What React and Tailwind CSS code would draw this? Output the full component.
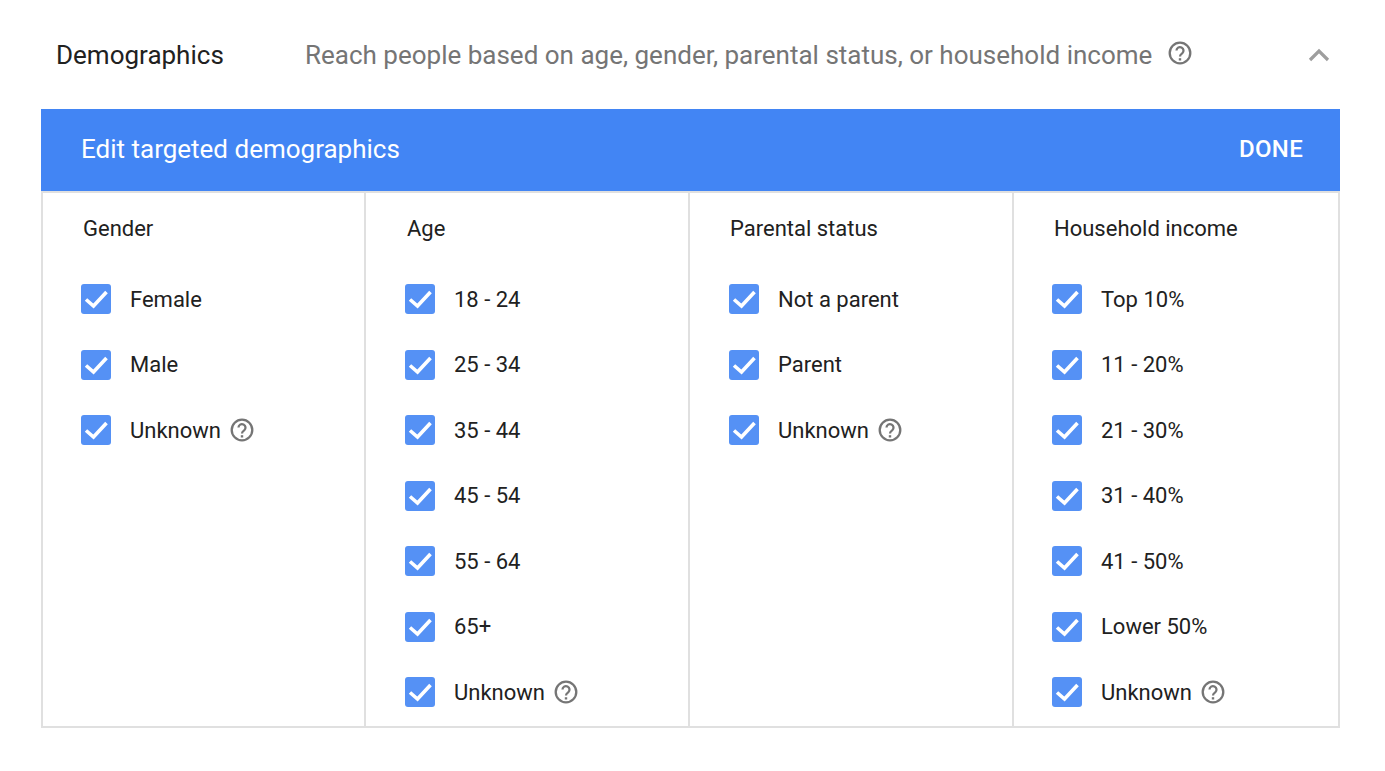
const columns = [
  { title: "Gender", width: "w-[323px] pl-10", rows: "-ml-0.5", options: [["Female"], ["Male"], ["Unknown", true]] },
  {
    title: "Age",
    width: "w-[324px] pl-[41px]",
    rows: "-ml-0.5",
    options: [["18 - 24"], ["25 - 34"], ["35 - 44"], ["45 - 54"], ["55 - 64"], ["65+"], ["Unknown", true]],
  },
  {
    title: "Parental status",
    width: "w-[324px] pl-10",
    rows: "-ml-px",
    options: [["Not a parent"], ["Parent"], ["Unknown", true]],
  },
  {
    title: "Household income",
    width: "flex-1 pl-10",
    rows: "-ml-0.5",
    options: [["Top 10%"], ["11 - 20%"], ["21 - 30%"], ["31 - 40%"], ["41 - 50%"], ["Lower 50%"], ["Unknown", true]],
  },
];

function HelpIcon({ className }) {
  return (
    <svg viewBox="0 0 24 24" className={className} fill="none" stroke="#757575">
      <circle cx="12" cy="12" r="10.3" strokeWidth="2.3" />
      <path d="M8.5 9.6a3.5 3.5 0 1 1 5.7 2.7c-1.3.9-2.2 1.5-2.2 3.1" strokeWidth="2.3" />
      <path d="M10.8 17.2h2.4v2.3h-2.4z" fill="#757575" stroke="none" />
    </svg>
  );
}

function Checkbox() {
  return (
    <span className="flex h-[30px] w-[30px] shrink-0 items-center justify-center rounded-[3px] bg-[#5591f5]">
      <svg viewBox="0 0 30 30" className="h-[30px] w-[30px]" fill="none">
        <path d="M5 15.5l7.5 6.5L25.5 8" stroke="white" strokeWidth="3.6" />
      </svg>
    </span>
  );
}

function Column({ title, width, rows, options, last }) {
  return (
    <div className={`${width} pt-[23px] ${last ? "" : "border-r-2 border-[#e0e0e0]"}`}>
      <h3 className="h-[26px] text-[22px] leading-[26px] text-[#212121]">{title}</h3>
      <div className={`${rows} mt-[42.1px] flex flex-col gap-[35.5px]`}>
        {options.map(([label, help]) => (
          <label key={label} className="flex h-[30px] items-center">
            <Checkbox />
            <span className="ml-[19px] text-[22px] text-[#212121]">{label}</span>
            {help && <HelpIcon className="ml-[9px] h-6 w-6" />}
          </label>
        ))}
      </div>
    </div>
  );
}

export default function App() {
  return (
    <div className="min-h-[771px] bg-white px-[41px] font-['Roboto',sans-serif]">
      <div className="flex h-[109px] items-center pr-[13px]">
        <div className="mt-0.5 flex items-center">
          <div className="w-[264px] pl-[15px] text-[26px] text-[#212121]">Demographics</div>
          <div className="text-[26px] text-[#757575]">Reach people based on age, gender, parental status, or household income</div>
        </div>
        <HelpIcon className="ml-4 mb-1 h-6 w-6" />
        <svg viewBox="0 0 24 16" className="ml-auto h-4 w-6" fill="none">
          <path d="M3 13l9-9 9 9" stroke="#9e9e9e" strokeWidth="3.2" />
        </svg>
      </div>
      <div className="w-[1299px]">
        <div className="flex h-[82px] items-center justify-between bg-[#4285f4] pb-0.5 pl-10 pr-[37px] text-white">
          <span className="text-[26px]">Edit targeted demographics</span>
          <span className="text-[24px] font-medium tracking-[0.3px]">DONE</span>
        </div>
        <div className="flex h-[537px] border-x-2 border-y-2 border-[#e0e0e0]">
          {columns.map((col, i) => (
            <Column key={col.title} {...col} last={i === columns.length - 1} />
          ))}
        </div>
      </div>
    </div>
  );
}
